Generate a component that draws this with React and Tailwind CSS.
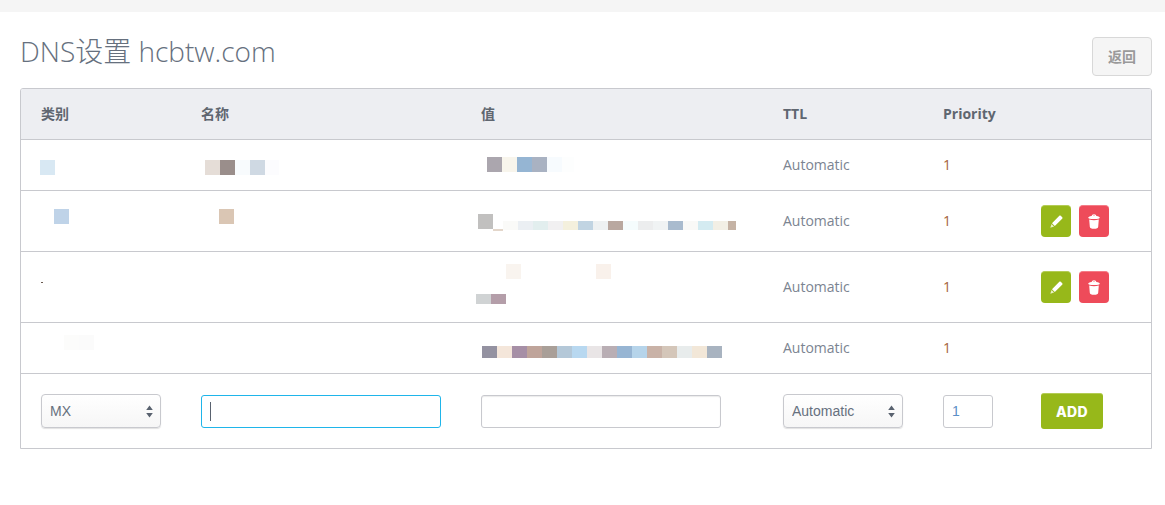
import { useState } from "react"

const cols = "grid grid-cols-[160px_280px_302px_160px_98px_1fr]"
const cjk = "font-['Open_Sans','Noto_Sans_CJK_SC',sans-serif]"

// blurred-out record values, as runs of [colour, width, height, lift]
function Mosaic({ blocks, className = "" }) {
  return (
    <div className={`flex items-end self-start ${className}`}>
      {blocks.map(([color, w, h, lift], i) => (
        <div key={i} style={{ backgroundColor: color, width: w, height: h ?? 15, marginBottom: lift ?? 0 }} />
      ))}
    </div>
  )
}

function Arrows() {
  return (
    <svg className="absolute right-[8px] top-[11px] pointer-events-none" width="7" height="13" viewBox="0 0 7 13">
      <path d="M3.5 0.5 L6.8 5 H0.2 Z M0.2 8 H6.8 L3.5 12.5 Z" fill="#59626f" />
    </svg>
  )
}

function Select({ value, options, className = "" }) {
  const [current, setCurrent] = useState(value)
  return (
    <div className={`relative ${className}`}>
      <select
        value={current}
        onChange={(e) => setCurrent(e.target.value)}
        className="appearance-none w-full h-[34px] pl-2 rounded-[4px] border border-[#c8c9ce] bg-gradient-to-b from-white to-[#f6f6f6] shadow-[0_1px_1px_rgba(0,0,0,0.12)] text-sm text-[#66707e] font-['Liberation_Sans',sans-serif] outline-none"
      >
        {options.map((o) => (
          <option key={o}>{o}</option>
        ))}
      </select>
      <Arrows />
    </div>
  )
}

function Pencil() {
  return (
    <svg width="13" height="13" viewBox="0 0 13 13">
      <path d="M9.6 0.6 Q10.2 0.2 10.8 0.8 L12.2 2.2 Q12.8 2.8 12.4 3.4 L4.8 11 L2 8.2 Z" fill="#fff" />
      <path d="M1.5 8.9 L4.1 11.5 L0.3 12.7 Z" fill="#e8efc4" />
    </svg>
  )
}

function Trash() {
  return (
    <svg width="12" height="15" viewBox="0 0 12 15">
      <path
        fillRule="evenodd"
        d="M3.6 1.9 Q3.8 0.2 6 0.2 Q8.2 0.2 8.4 1.9 Q11.8 2.4 11.8 3.7 Q11.8 5 6 5 Q0.2 5 0.2 3.7 Q0.2 2.4 3.6 1.9 Z M4.9 1.8 Q6 1.6 7.1 1.8 Q7 1.2 6 1.2 Q5 1.2 4.9 1.8 Z"
        fill="#fff"
      />
      <path d="M1.2 5.6 Q6 6.8 10.8 5.6 L10.2 12.8 Q10 14.8 6 14.8 Q2 14.8 1.8 12.8 Z" fill="#fff" />
    </svg>
  )
}

function Actions() {
  return (
    <div className="flex gap-2 pl-5">
      <button className="w-[30px] h-[32px] rounded-[4px] bg-[#97b81a] border-t border-[#b4cc55] flex items-center justify-center">
        <Pencil />
      </button>
      <button className="w-[30px] h-[32px] rounded-[4px] bg-[#ee4b5a] border-t border-[#f47c87] flex items-center justify-center">
        <Trash />
      </button>
    </div>
  )
}

function Ttl() {
  return <div className="pl-5 self-center text-sm text-[#7b8491]">Automatic</div>
}

function Priority() {
  return <div className="pl-5 self-center text-sm text-[#a5623a]">1</div>
}

export default function App() {
  return (
    <div className={`min-h-[505px] bg-white ${cjk}`}>
      <div className="h-3 bg-[#f5f5f5]" />
      <div className="pl-5 pr-[13px]">
        <div className="flex justify-between h-[76px] items-start">
          <h1 className="mt-[20px] text-[28px] leading-[38px] font-light text-[#66707e]">DNS设置 hcbtw.com</h1>
          <button className="mt-[25px] w-[60px] h-[39px] rounded-[4px] border border-[#d8d8d8] bg-[#f5f5f5] text-sm font-bold text-[#9a9a9a]">
            返回
          </button>
        </div>

        <div className="border border-[#c8c9ce] rounded-t-[3px] h-[361px] overflow-hidden">
          <div className={`${cols} h-[51px] items-center bg-[#edeef2] border-b border-[#c8c9ce] text-sm font-bold text-[#5f6670]`}>
            <div className="pl-5">类别</div>
            <div className="pl-5">名称</div>
            <div className="pl-5">值</div>
            <div className="pl-5">TTL</div>
            <div className="pl-5">Priority</div>
            <div />
          </div>

          <div className={`${cols} h-[51px] border-b border-[#c8c9ce]`}>
            <Mosaic className="ml-[19px] mt-5" blocks={[["#d8e8f3", 15]]} />
            <Mosaic className="ml-6 mt-5" blocks={[["#e5ddd7", 15], ["#9a8e8b", 15], ["#f8fbfd", 15], ["#cfd9e3", 15], ["#fcfcfe", 14]]} />
            <Mosaic className="ml-[26px] mt-[17px]" blocks={[["#aba6ae", 15], ["#f8f5ec", 15], ["#95b5d3", 15], ["#a9b2c2", 15], ["#f7fbfe", 15], ["#fdfefe", 12]]} />
            <Ttl />
            <Priority />
            <div />
          </div>

          <div className={`${cols} h-[61px] items-center border-b border-[#c8c9ce]`}>
            <Mosaic className="ml-[33px] mt-[18px]" blocks={[["#bfd3e8", 15]]} />
            <Mosaic className="ml-[38px] mt-[18px]" blocks={[["#dac6b4", 15]]} />
            <Mosaic
              className="ml-[17px] mt-[23px]"
              blocks={[
                ["#c1c0bf", 15, 15, 2], ["#e3d6ca", 10, 2], ["#fafaf8", 15, 9, 1], ["#ebeff3", 15, 9, 1], ["#e2eeee", 15, 9, 1],
                ["#f1f0f1", 15, 9, 1], ["#f4f0dd", 15, 9, 1], ["#c1d4e2", 15, 9, 1], ["#eef1f2", 15, 9, 1], ["#b9a8a0", 15, 9, 1],
                ["#f5fcfd", 15, 9, 1], ["#ecedee", 15, 9, 1], ["#f0f3f4", 15, 9, 1], ["#a9bbce", 15, 9, 1], ["#f9f9f7", 15, 9, 1],
                ["#d4ebf1", 15, 9, 1], ["#f2efe5", 15, 9, 1], ["#c5b3a5", 8, 9, 1],
              ]}
            />
            <Ttl />
            <Priority />
            <Actions />
          </div>

          <div className={`${cols} h-[71px] items-center border-b border-[#c8c9ce]`}>
            <div className="ml-5 w-[2px] h-px bg-[#6b5a50] self-start mt-[30px]" />
            <div />
            <div className="flex flex-col self-start mt-3">
              <div className="flex ml-[45px] gap-[75px]">
                <div className="w-[15px] h-[15px] bg-[#f9f4ef]" />
                <div className="w-[15px] h-[15px] bg-[#f9f1eb]" />
              </div>
              <Mosaic className="ml-[15px] mt-[15px]" blocks={[["#d0d3d4", 15, 10], ["#b49ea9", 15, 10]]} />
            </div>
            <Ttl />
            <Priority />
            <Actions />
          </div>

          <div className={`${cols} h-[51px] border-b border-[#c8c9ce]`}>
            <Mosaic className="ml-[43px] mt-[12px]" blocks={[["#fcfcfb", 15], ["#fbfbfb", 15]]} />
            <div />
            <Mosaic
              className="ml-[21px] mt-[23px]"
              blocks={[
                ["#9492a1", 15, 12], ["#f4e6da", 15, 12], ["#a68fa6", 15, 12], ["#bfa49a", 15, 12], ["#a99f98", 15, 12],
                ["#b4c8d8", 15, 12], ["#b8d8f0", 15, 12], ["#e9e5e6", 15, 12], ["#b9aeb4", 15, 12], ["#97b5d3", 15, 12],
                ["#b6d4ea", 15, 12], ["#c9b2a7", 15, 12], ["#d4c6b9", 15, 12], ["#e8ecec", 15, 12], ["#f2e7d8", 15, 12],
                ["#a8b3c0", 15, 12],
              ]}
            />
            <Ttl />
            <Priority />
            <div />
          </div>

          <div className={`${cols} h-[74px] items-center`}>
            <Select className="ml-5 w-[120px]" value="MX" options={["A", "CNAME", "MX", "TXT"]} />
            <div className="relative pl-5">
              <input readOnly className="w-[240px] h-[33px] rounded-[3px] border border-[#1fb5ea] bg-white outline-none" />
              <span className="absolute left-[29px] top-[7px] w-px h-[19px] bg-[#59626f]" />
            </div>
            <div className="pl-5">
              <input readOnly className="w-[240px] h-[33px] rounded-[3px] border border-[#c8c9ce] shadow-[inset_0_1px_1px_rgba(0,0,0,0.08)] bg-white outline-none" />
            </div>
            <Select className="ml-5 w-[120px]" value="Automatic" options={["Automatic", "600", "3600"]} />
            <div className="pl-5">
              <input
                readOnly
                value="1"
                className="w-[50px] h-[33px] pl-2 rounded-[3px] border border-[#c8c9ce] bg-white text-sm text-[#5b8fc7] font-['Liberation_Sans',sans-serif] outline-none"
              />
            </div>
            <div className="pl-5">
              <button className="w-[62px] h-[36px] rounded-[3px] bg-[#97b81a] border-t border-[#b4cc55] text-sm font-extrabold tracking-[0.3px] text-white font-['Inter',sans-serif]">
                ADD
              </button>
            </div>
          </div>
        </div>
      </div>
    </div>
  )
}
